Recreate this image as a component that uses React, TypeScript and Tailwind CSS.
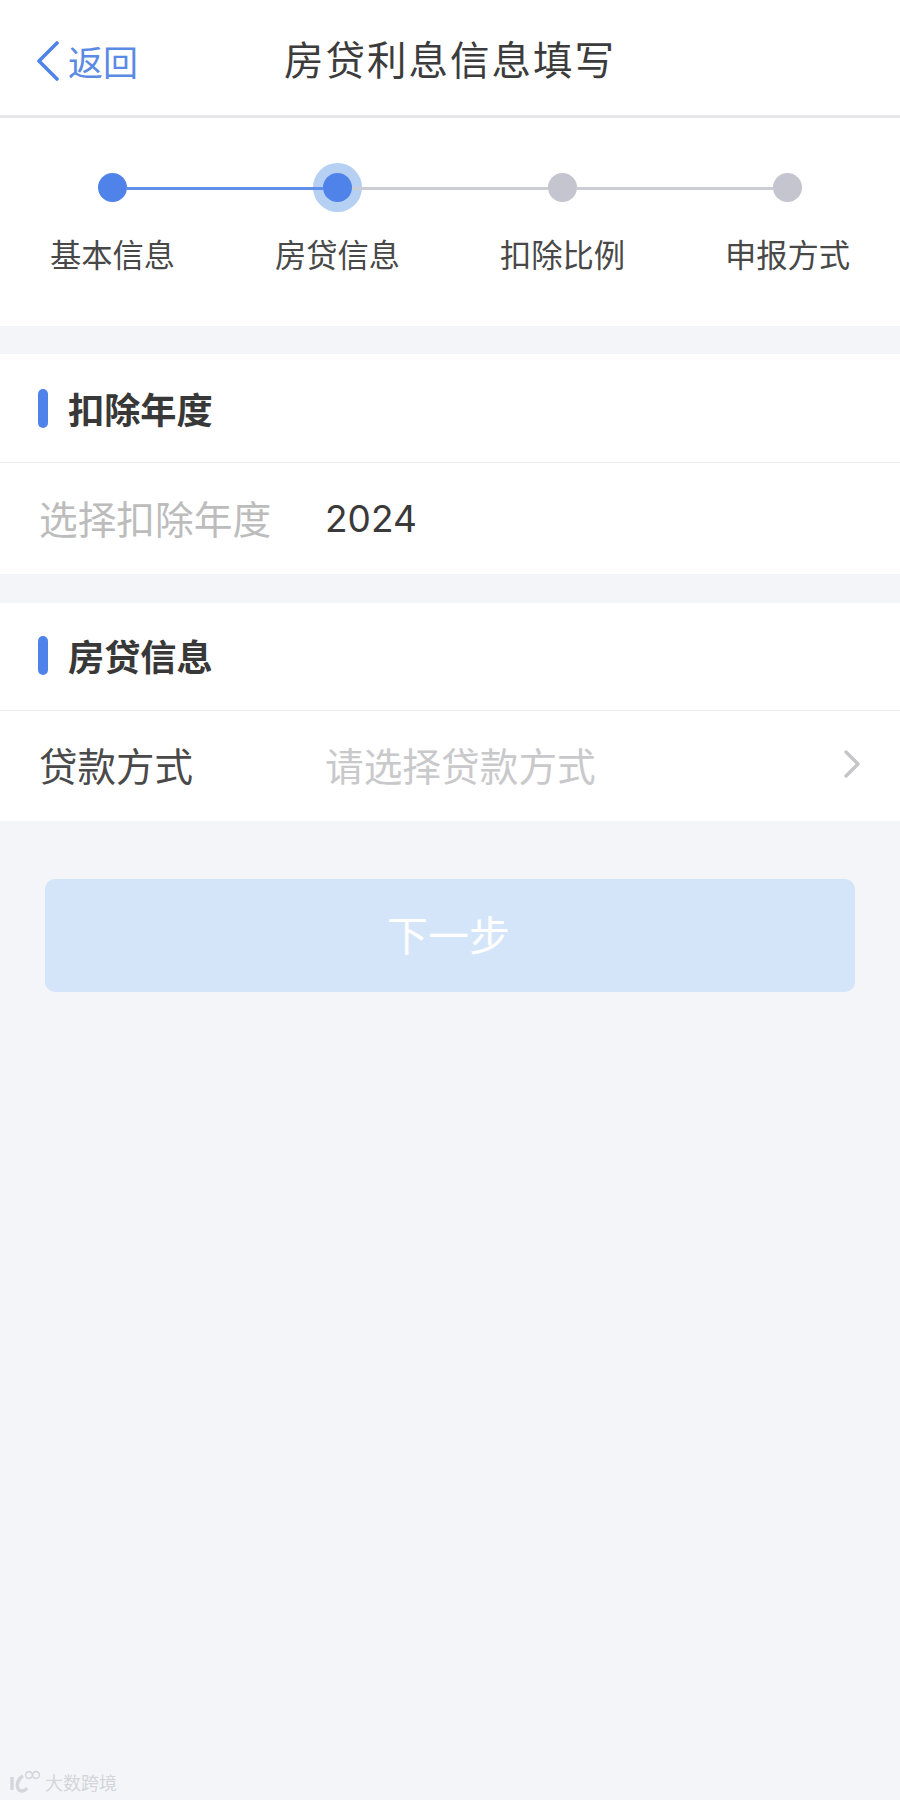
const font = { fontFamily: '"Noto Sans CJK SC", "Noto Sans", sans-serif' }

const steps = ['基本信息', '房贷信息', '扣除比例', '申报方式']

function Stepper() {
  return (
    <section className="h-[208px] bg-white pt-[54px]">
      <div className="flex h-[30px] items-center px-[98px]">
        <span className="h-[29px] w-[29px] shrink-0 rounded-full bg-[#5083ea]" />
        <span className="h-[3px] flex-1 translate-y-[1px] bg-[#5f8fe9]" />
        <span className="h-[29px] w-[29px] shrink-0 rounded-full bg-[#5083ea] shadow-[0_0_0_10px_#b5d0f3]" />
        <span className="h-[3px] flex-1 translate-y-[1px] bg-[#cbccd6]" />
        <span className="h-[29px] w-[29px] shrink-0 rounded-full bg-[#c4c5cf]" />
        <span className="h-[3px] flex-1 translate-y-[1px] bg-[#cbccd6]" />
        <span className="h-[29px] w-[29px] shrink-0 rounded-full bg-[#c4c5cf]" />
      </div>
      <div className="mt-[30px] grid grid-cols-4">
        {steps.map((s) => (
          <p key={s} className="text-center text-[31.3px] leading-[44px] text-[#484848]">
            {s}
          </p>
        ))}
      </div>
    </section>
  )
}

function SectionTitle({ title, className }: { title: string; className: string }) {
  return (
    <div className={`flex items-center border-b border-[#ececee] pl-[38px] ${className}`}>
      <span className="mr-[20px] h-[39px] w-[10px] rounded-full bg-[#5083ea]" />
      <h2 className="text-[36.2px] leading-[50px] font-bold text-[#383838]">{title}</h2>
    </div>
  )
}

export default function App() {
  return (
    <div style={font} className="relative h-[1800px] w-[900px] overflow-hidden bg-[#f3f5f9]">
      <header className="relative flex h-[118px] items-center justify-center border-b-[3px] border-[#e8e8ea] bg-white">
        <div className="absolute top-0 left-[36px] flex h-[122px] items-center">
          <svg width="24" height="40" viewBox="0 0 24 40" fill="none" className="mr-[8px]">
            <path d="M21 2 L3 20 L21 38" stroke="#5083ea" strokeWidth="3.6" strokeLinecap="round" strokeLinejoin="round" />
          </svg>
          <span className="text-[35px] leading-[48px] text-[#5b8ae4]">返回</span>
        </div>
        <h1 className="text-[39.5px] leading-[54px] tracking-[2px] text-[#3c3c3c]">房贷利息信息填写</h1>
      </header>

      <Stepper />

      <section className="mt-[28px] bg-white">
        <SectionTitle title="扣除年度" className="h-[109px]" />
        <div className="flex h-[111px] items-center pb-[3px] pl-[39px]">
          <span className="w-[286px] text-[38.7px] leading-[54px] text-[#bcbcbc]">选择扣除年度</span>
          <span className="translate-y-[2px] text-[37px] leading-[54px] text-[#3a3a3a]" style={{ fontFamily: 'Inter, sans-serif' }}>
            2024
          </span>
        </div>
      </section>

      <section className="mt-[29px] bg-white">
        <SectionTitle title="房贷信息" className="h-[108px] pb-[3px]" />
        <div className="flex h-[110px] items-center pb-[4px] pl-[39px]">
          <span className="w-[286px] text-[38.5px] leading-[54px] text-[#4a4a4a]">贷款方式</span>
          <span className="flex-1 text-[38.7px] leading-[54px] text-[#c9c9cb]">请选择贷款方式</span>
          <svg width="18" height="30" viewBox="0 0 18 30" fill="none" className="mr-[39px]">
            <path d="M3 3 L15 15 L3 27" stroke="#c6c6c8" strokeWidth="3.4" strokeLinecap="round" strokeLinejoin="round" />
          </svg>
        </div>
      </section>

      <div className="mx-[45px] mt-[58px] flex h-[113px] items-center justify-center rounded-[10px] bg-[#d5e5f9] pr-[3px] pb-[6px]">
        <span className="text-[41px] leading-[56px] text-white">下一步</span>
      </div>

      {/* watermark */}
      <div className="absolute bottom-[6px] left-[9px] flex items-center gap-[4px] text-[#d4d6db]">
        <svg width="32" height="24" viewBox="0 0 32 24" fill="none" stroke="currentColor">
          <path d="M3 7 V20" strokeWidth="3.4" />
          <path d="M14 6 C8 9 7 17 10 20 C13 22 16 21 18 18" strokeWidth="3.4" />
          <circle cx="20" cy="5" r="3.4" strokeWidth="1.6" />
          <circle cx="27" cy="5" r="3.4" strokeWidth="1.6" />
        </svg>
        <span className="text-[18px] leading-[24px]">大数跨境</span>
      </div>
    </div>
  )
}
